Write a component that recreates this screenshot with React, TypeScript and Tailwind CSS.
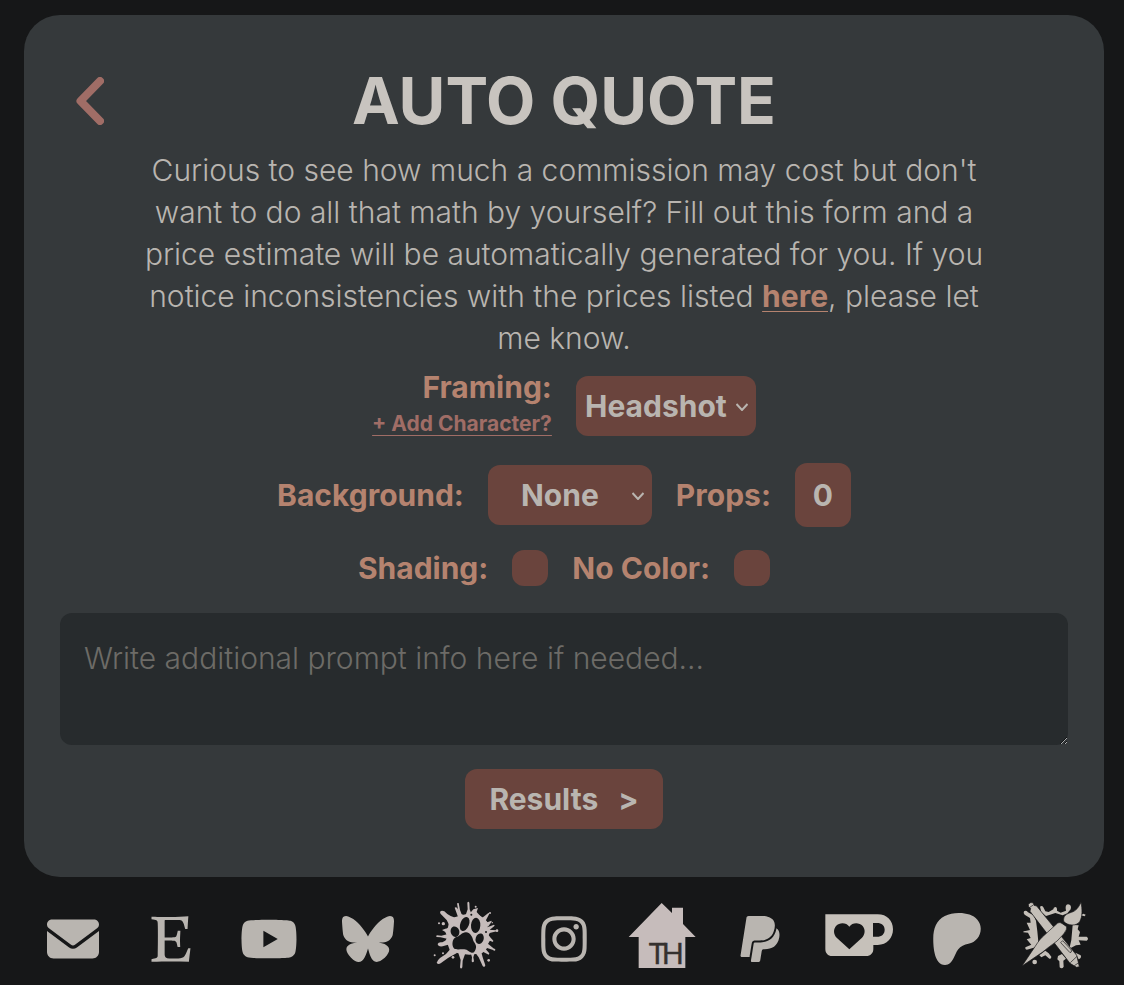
import type { ReactNode } from "react";
import {
  FaBluesky,
  FaEnvelope,
  FaEtsy,
  FaInstagram,
  FaPatreon,
  FaPaypal,
  FaYoutube,
} from "react-icons/fa6";

const pill = "rounded-xl bg-[#6a443d] font-bold text-[#b9b5b0]";
const label = "font-bold text-[#b5836f]";

function Select({ id, options, width }: { id: string; options: string[]; width: string }) {
  return (
    <div className={`relative ${width}`}>
      <select
        id={id}
        className={`h-[60px] w-full appearance-none pl-2 pr-7 text-center [text-align-last:center] ${pill}`}
      >
        {options.map((o) => (
          <option key={o}>{o}</option>
        ))}
      </select>
      <svg
        viewBox="0 0 12 8"
        className="pointer-events-none absolute right-2 top-[27px] h-2 w-3 fill-none stroke-[#b9b5b0] stroke-2"
      >
        <path d="M0.5 1 6 7l5.5-6" />
      </svg>
    </div>
  );
}

function PawSplat() {
  return (
    <svg viewBox="30 33 216 228" className="h-[76px] w-[72px]">
      <g fill="#c6bcbb">
        <path d="M88 92L104 82L124 76L150 70L178 76L194 86L204 98L203 112L212 122L206 136L212 148L204 162L200 176L186 190L168 192L148 194L128 192L108 188L90 182L84 166L76 154L82 140L76 126L84 112Z" />
        <path d="M60 66Q64 60 73 64Q82 74 92 78L108 84L88 106L80 90L66 76Q60 72 60 66Z" />
        <path d="M104 53Q108 49 112 55L122 72L130 74L116 86Z" />
        <path d="M111 40L116 39L120 60L126 76L118 78L114 58Z" />
        <path d="M142 38Q145 33 148 38L149 58L156 76L136 78L143 58Z" />
        <path d="M150 70L160 58L174 54L170 66L184 82L160 84Z" />
        <path d="M186 84L206 68L208 71L196 94Z" />
        <path d="M194 100L214 92L215 95L204 110Z" />
        <path d="M202 112L222 104L224 107L206 122Z" />
        <path d="M204 119L230 121V124L206 130Z" />
        <path d="M204 134L220 152Q219 158 214 154L200 150Z" />
        <path d="M200 158L224 178L222 181L194 172Z" />
        <path d="M194 174L208 190L206 194L186 184Z" />
        <path d="M182 180L188 202L196 226Q194 234 188 228L176 202L166 188Z" />
        <path d="M152 188H164L160 202L162 214Q158 220 155 214L156 202Z" />
        <path d="M114 186L136 190L128 212L127 232Q123 239 120 232L122 210Z" />
        <path d="M92 176L112 188L84 204L62 220Q54 225 50 218Q51 212 60 204L78 192Z" />
        <path d="M84 148V164L68 169Q54 171 53 162Q55 155 67 157Z" />
        <path d="M84 132V147L62 142L50 141Q46 138 51 136L64 137Z" />
        <path d="M86 114L80 128L66 120L76 116Z" />
        <circle cx="57" cy="100" r="3" />
        <circle cx="70" cy="101" r="5" />
        <circle cx="167" cy="50" r="3" />
        <circle cx="210" cy="69" r="3" />
        <circle cx="217" cy="98" r="2" />
        <circle cx="231" cy="122" r="4" />
        <circle cx="69" cy="190" r="3" />
        <circle cx="44" cy="196" r="3" />
        <circle cx="99" cy="202" r="4" />
        <circle cx="206" cy="211" r="4" />
        <circle cx="223" cy="179" r="3" />
      </g>
      <g fill="#161718">
        <ellipse cx="134" cy="102" rx="13" ry="22" transform="rotate(22 134 102)" />
        <ellipse cx="167" cy="106" rx="14" ry="23" transform="rotate(4 167 106)" />
        <ellipse cx="105" cy="125" rx="13" ry="16" transform="rotate(-18 105 125)" />
        <ellipse cx="179" cy="146" rx="12" ry="16" transform="rotate(18 179 146)" />
        <path d="M139 127c10 1 18 12 20 22 2 8 11 14 9 24-2 9-5 16-13 15-7-1-12-9-22-10-12-1-27 3-32-4-7-10-3-28 6-32 13-3 20-17 32-15z" />
        <circle cx="154" cy="74" r="3" />
        <circle cx="198" cy="126" r="3" />
      </g>
    </svg>
  );
}

function House() {
  return (
    <svg viewBox="50 63 216 228" className="h-[76px] w-[72px]">
      <path
        fill="#c6bcbb"
        d="M157 69l31 30V83h33v49l38 39h-31v93H88v-93H58z"
      />
      <text
        x="118 157"
        y="251"
        fontSize="87"
        fill="#35312f"
        stroke="#35312f"
        strokeWidth="1"
        className="font-['Lato',sans-serif]"
      >
        TH
      </text>
    </svg>
  );
}

function Mug() {
  return (
    <svg viewBox="639 63 216 228" className="h-[76px] w-[72px]">
      <path
        fill="#c6c1ba"
        fillRule="evenodd"
        d="M646 103H803c28 0 46 19 46 45s-18 47-46 47h-13v12c0 13-9 21-21 21H666c-12 0-20-8-20-21zM789 129v41h12c14 0 23-8 23-21s-9-20-23-20zM718 140c-9-13-29-14-40-2-9 11-7 26 2 35l38 35 38-35c9-9 11-24 2-35-11-12-31-11-40 2z"
      />
    </svg>
  );
}

function PenAndBrush() {
  return (
    <svg viewBox="27 33 216 228" className="h-[76px] w-[72px]">
      <g fill="#c4bfb8">
        <path d="M42 64Q48 60 54 67L70 76L78 92L82 124L86 166L76 172L56 178Q44 182 46 172L64 164L50 148L62 144L54 128L40 127Q38 122 50 122L60 120L50 98L62 98L60 84L44 74Q39 70 42 64Z" />
        <path d="M90 50Q96 45 100 52L106 64L116 66L130 58Q130 52 136 51Q142 52 141 62L152 68L168 62Q164 44 174 43Q186 44 182 58L172 70L158 76L136 69L120 74L108 78L94 66Z" />
        <path d="M188 105L206 106L203 118L210 126L206 140L230 140Q238 146 230 152L206 151L212 164L198 166L178 176L184 150Z" />
        <path d="M144 198L156 192L168 206L160 212L161 230Q156 239 149 232L148 214L142 208Z" />
        <path d="M88 196L106 182L116 190L124 200Q124 208 118 206L106 196L94 202Z" />
        <path d="M196 188L212 196Q216 204 206 208Z" />
        <circle cx="74" cy="216" r="7" />
        <path d="M212 76L220 71L227 74L224 79Z" />
      </g>
      <g fill="#c4bfb8" stroke="#161718" strokeWidth="2" strokeLinejoin="round">
        <path d="M55 43Q62 34 70 39L72 46L80 48L200 196L208 230L200 232L180 220L60 64L62 55L56 51Z" />
        <path d="M56 54L70 45M181 218L201 199M193 227L208 217" fill="none" />
        <path d="M152 158L158 152L184 180Q186 188 180 188L152 158" fill="none" />
        <path d="M36 228L83 158Q88 150 97 141L143 99Q150 95 157 101L170 110Q172 118 161 132Q143 155 118 170L98 186Z" />
        <path d="M161 94C159 77 169 72 184 67C198 63 206 52 213 37C217 57 218 80 209 95C199 109 173 108 161 94Z" />
      </g>
    </svg>
  );
}

const glyph = "h-[52px] w-auto";

const links: { name: string; icon: ReactNode }[] = [
  { name: "Email", icon: <FaEnvelope className={glyph} /> },
  { name: "Etsy", icon: <FaEtsy className={glyph} /> },
  { name: "YouTube", icon: <FaYoutube className="size-[58px]" /> },
  { name: "Bluesky", icon: <FaBluesky className={glyph} /> },
  { name: "Paw", icon: <PawSplat /> },
  { name: "Instagram", icon: <FaInstagram className={glyph} /> },
  { name: "Toyhouse", icon: <House /> },
  { name: "PayPal", icon: <FaPaypal className={glyph} /> },
  { name: "Ko-fi", icon: <Mug /> },
  { name: "Patreon", icon: <FaPatreon className={glyph} /> },
  { name: "Artists", icon: <PenAndBrush /> },
];

export default function App() {
  return (
    <div className="min-h-screen bg-[#161718] pb-2 pl-6 pr-5 pt-[15px] font-['Inter',sans-serif] text-[30px] leading-[42px] text-[#b9b5b0]">
      <main className="rounded-[36px] bg-[#35393b] px-9 pb-12 pt-[50px]">
        <header className="grid grid-cols-[60px_1fr_60px] items-center">
          <button type="button" aria-label="Back" className="pl-4">
            <svg viewBox="0 0 28 48" className="h-12 w-7 fill-none stroke-[#a06d66]">
              <path d="M24 4 4.500 24 24 44" strokeWidth="8" strokeLinecap="round" strokeLinejoin="round" />
            </svg>
          </button>
          <h1 className="text-center text-[64px] font-bold leading-[72px] text-[#c8c4bf]">AUTO QUOTE</h1>
        </header>

        <p className="mx-auto mt-3 max-w-[860px] text-center font-light">
          Curious to see how much a commission may cost but don't want to do all that math by yourself? Fill
          out this form and a price estimate will be automatically generated for you. If you notice
          inconsistencies with the prices listed{" "}
          <a href="#prices" className="font-bold text-[#b5836f] underline decoration-1 underline-offset-4">
            here
          </a>
          , please let me know.
        </p>

        <form className="flex flex-col items-center">
          <div className="mt-2.5 flex items-center gap-6">
            <div className="flex flex-col items-end">
              <label htmlFor="framing" className={`leading-9 ${label}`}>
                Framing:
              </label>
              <button
                type="button"
                className="text-[21px] font-bold leading-[38px] text-[#a06d66] underline decoration-1 underline-offset-4"
              >
                + Add Character?
              </button>
            </div>
            <Select id="framing" width="w-[180px]" options={["Headshot", "Half Body", "Full Body"]} />
          </div>

          <div className="mt-5 flex items-center gap-6">
            <label htmlFor="background" className={label}>
              Background:
            </label>
            <Select id="background" width="w-[164px]" options={["None", "Simple", "Detailed"]} />
            <label htmlFor="props" className={label}>
              Props:
            </label>
            <input id="props" type="text" inputMode="numeric" defaultValue="0" className={`h-16 w-14 text-center ${pill}`} />
          </div>

          <div className="mt-5 flex items-center gap-6">
            <label htmlFor="shading" className={label}>
              Shading:
            </label>
            <input id="shading" type="checkbox" className="size-9 appearance-none rounded-xl bg-[#6a443d]" />
            <label htmlFor="no-color" className={label}>
              No Color:
            </label>
            <input id="no-color" type="checkbox" className="size-9 appearance-none rounded-xl bg-[#6a443d]" />
          </div>

          <textarea
            aria-label="Additional prompt info"
            placeholder="Write additional prompt info here if needed..."
            className="mt-6 h-[132px] w-full rounded-xl bg-[#272b2d] p-6 font-light placeholder:text-[#6d6b67]"
          />

          <button type="button" className={`mt-6 flex h-[60px] items-center gap-5 px-6 ${pill}`}>
            <span>Results</span>
            <span>&gt;</span>
          </button>
        </form>
      </main>

      <nav className="mt-6 grid grid-cols-11 items-center text-[#b9b5b0]">
        {links.map((l) => (
          <a key={l.name} href="#" aria-label={l.name} className="flex h-[76px] items-center justify-center">
            {l.icon}
          </a>
        ))}
      </nav>
    </div>
  );
}
